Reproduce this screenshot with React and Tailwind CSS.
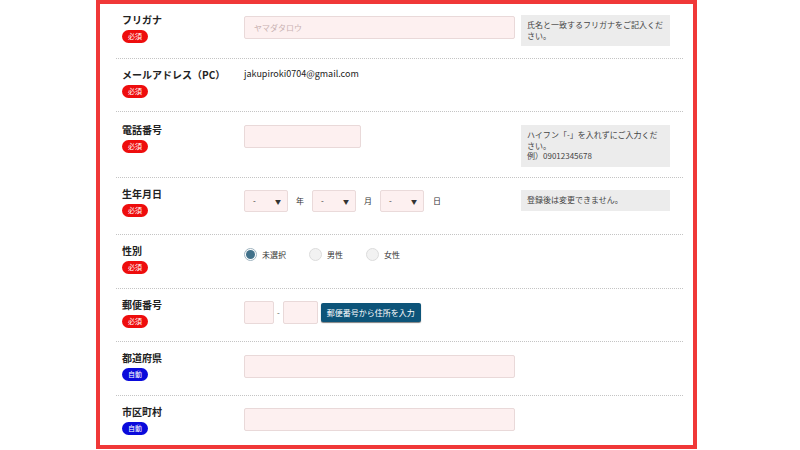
const font = { fontFamily: '"Noto Sans CJK JP", "Noto Sans", sans-serif' };

const Badge = ({ auto }) => (
  <span
    className={`mt-[3px] flex h-[13px] w-[26px] items-center justify-center rounded-full text-[7px] leading-none text-white ${
      auto ? 'bg-[#0a0adb]' : 'bg-[#ee0d0d]'
    }`}
  >
    {auto ? '自動' : '必須'}
  </span>
);

const Label = ({ text, auto }) => (
  <div className="flex w-[128px] shrink-0 flex-col pl-[6px] pt-[9px]">
    <span className="text-[10px] font-bold leading-[14px] text-[#222]">{text}</span>
    <Badge auto={auto} />
  </div>
);

const Input = ({ w, placeholder }) => (
  <div
    className={`flex h-[23px] items-center rounded-[2px] border border-[#e9d9d9] bg-[#fdf0f0] px-[9px] text-[8px] text-[#c9b2b2] ${w}`}
  >
    {placeholder}
  </div>
);

const Note = ({ children }) => (
  <div className="w-[149px] bg-[#ececec] px-[6px] py-[5px] text-[8px] leading-[10.5px] text-[#444]">
    {children}
  </div>
);

const Select = () => (
  <div className="flex h-[22px] w-[44px] items-center justify-between rounded-[2px] border border-[#eadada] bg-[#fdf0f0] pl-[8px] pr-[6px] text-[8px] text-[#333]">
    <span>-</span>
    <span className="text-[6px]">▼</span>
  </div>
);

const Radio = ({ checked, label }) => (
  <div className="flex items-center">
    <span
      className={`flex h-[13px] w-[13px] items-center justify-center rounded-full border ${
        checked ? 'border-[#9fb4c0] bg-white' : 'border-[#dcdcdc] bg-[#f2f2f2]'
      }`}
    >
      {checked && <span className="h-[9px] w-[9px] rounded-full bg-[#41718a]" />}
    </span>
    <span className="ml-[5px] text-[8px] text-[#333]">{label}</span>
  </div>
);

const Row = ({ h, children, last }) => (
  <div className={`flex ${h} ${last ? '' : 'border-b border-dotted border-[#c4c4c4]'}`}>{children}</div>
);

export default function App() {
  return (
    <div className="h-[450px] w-[800px] overflow-hidden bg-white" style={font}>
      <div className="ml-[96px] h-[449px] w-[601px] border-4 border-[#f03838] bg-white pl-4 pr-[10px]">
        <Row h="h-[55px]">
          <Label text="フリガナ" />
          <div className="w-[277px] pt-3">
            <Input w="w-[271px]" placeholder="ヤマダタロウ" />
          </div>
          <div className="pt-[11px]">
            <Note>氏名と一致するフリガナをご記入ください。</Note>
          </div>
        </Row>
        <Row h="h-[53px]">
          <Label text="メールアドレス（PC）" />
          <div className="pt-[9px] text-[9px] leading-[12px] text-[#222]">jakupiroki0704@gmail.com</div>
        </Row>
        <Row h="h-[66px]">
          <div className="pt-[2px]">
            <Label text="電話番号" />
          </div>
          <div className="w-[277px] pt-[13px]">
            <Input w="w-[117px]" />
          </div>
          <div className="pt-[13px]">
            <Note>
              ハイフン「-」を入れずにご入力ください。
              <br />
              例）09012345678
            </Note>
          </div>
        </Row>
        <Row h="h-[57px]">
          <Label text="生年月日" />
          <div className="flex w-[277px] items-start gap-[8px] pt-3">
            <Select />
            <span className="mt-[5px] text-[8px] text-[#333]">年</span>
            <Select />
            <span className="mt-[5px] text-[8px] text-[#333]">月</span>
            <Select />
            <span className="mt-[5px] ml-[1px] text-[8px] text-[#333]">日</span>
          </div>
          <div className="pt-3">
            <Note>登録後は変更できません。</Note>
          </div>
        </Row>
        <Row h="h-[54px]">
          <Label text="性別" />
          <div className="flex w-[277px] items-start gap-[23px] pt-[13px]">
            <Radio checked label="未選択" />
            <Radio label="男性" />
            <Radio label="女性" />
          </div>
        </Row>
        <Row h="h-[53px]">
          <Label text="郵便番号" />
          <div className="flex h-[35px] items-center pt-3">
            <Input w="w-[30px]" />
            <span className="mx-[3px] text-[8px] text-[#555]">-</span>
            <Input w="w-[35px]" />
            <button className="ml-[3px] h-[19px] rounded-[2px] bg-[#0d5479] px-[6px] text-[8px] text-white shadow-[0_1px_1px_rgba(0,0,0,0.5)]">
              郵便番号から住所を入力
            </button>
          </div>
        </Row>
        <Row h="h-[54px]">
          <Label text="都道府県" auto />
          <div className="pt-[13px]">
            <Input w="w-[271px]" />
          </div>
        </Row>
        <Row h="h-[50px]" last>
          <Label text="市区町村" auto />
          <div className="pt-3">
            <Input w="w-[271px]" />
          </div>
        </Row>
      </div>
    </div>
  );
}
